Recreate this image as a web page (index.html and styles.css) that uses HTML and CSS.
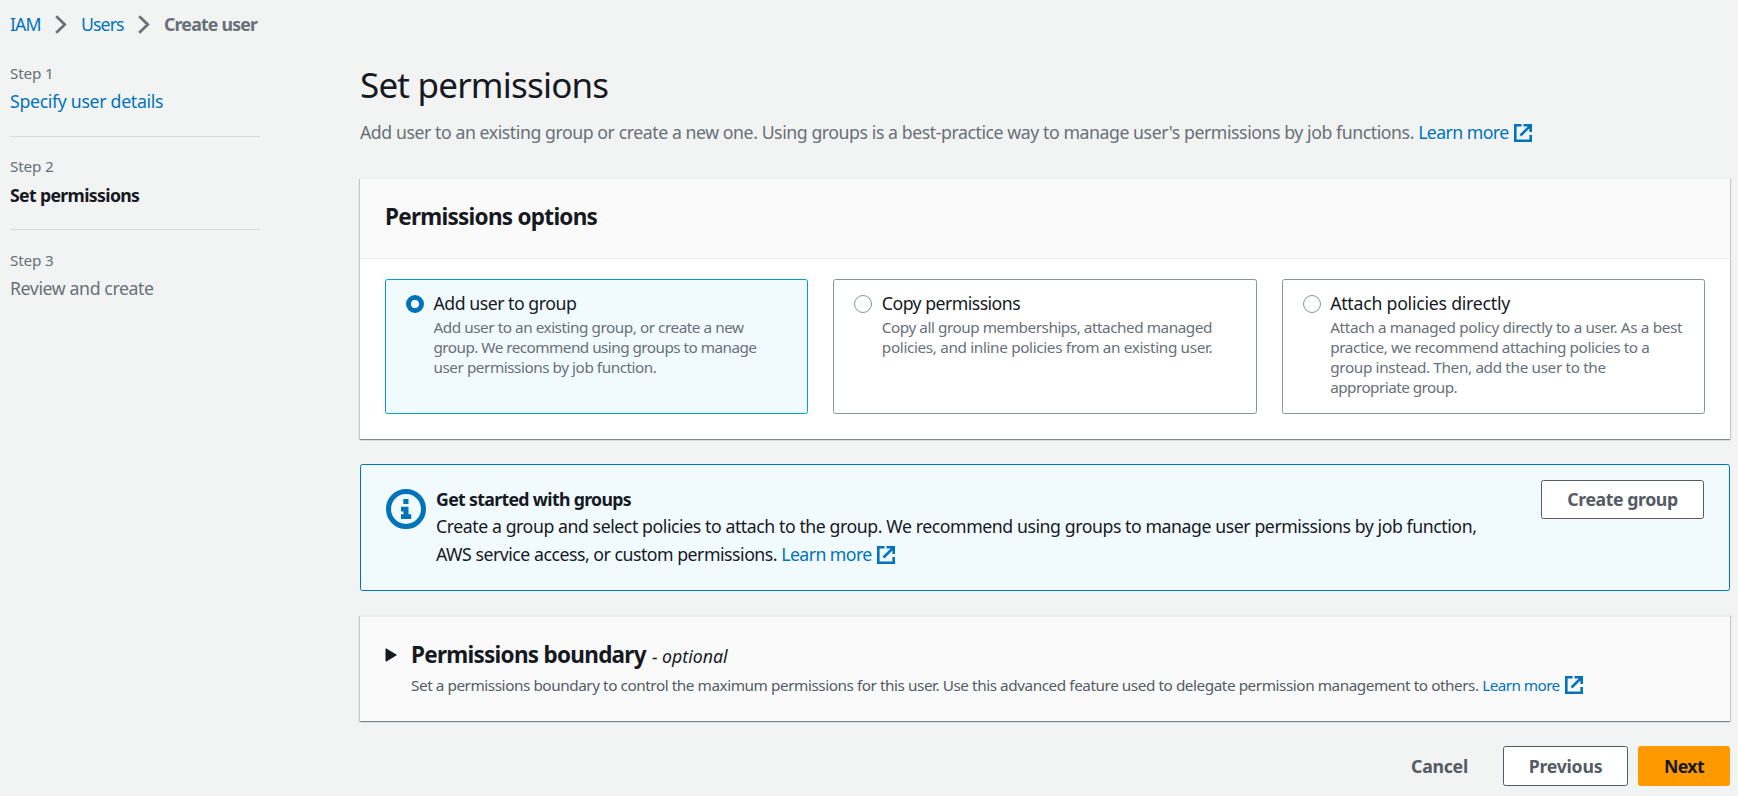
FILE: index.html
```
<!DOCTYPE html>
<html lang="en">
<head>
<meta charset="utf-8">
<title>Create user | IAM</title>
<link rel="stylesheet" href="styles.css">
</head>
<body>
<svg class="defs" width="0" height="0">
  <symbol id="external" viewBox="0 0 18 18"><path d="M7.500 1.300H1.300V16.700H16.700V11M9.500 1.300H16.700V8M16.200 1.800L6.500 11.500" fill="none" stroke="currentColor" stroke-width="2.600"/></symbol>
  <symbol id="chevron" viewBox="0 0 12 19"><path d="M1.2 1.3L9.8 9.5L1.2 17.7" fill="none" stroke="currentColor" stroke-width="2.7"/></symbol>
</svg>
<nav class="breadcrumb">
  <a class="crumb-iam">IAM</a>
  <svg class="chevron"><use href="#chevron"/></svg>
  <a class="crumb-users">Users</a>
  <svg class="chevron"><use href="#chevron"/></svg>
  <span class="crumb-current">Create user</span>
</nav>
<div class="layout">
  <aside class="steps">
    <div class="step"><div class="step-label">Step 1</div><a class="step-title step-link">Specify user details</a></div>
    <div class="step"><div class="step-label">Step 2</div><div class="step-title step-active">Set permissions</div></div>
    <div class="step"><div class="step-label">Step 3</div><div class="step-title step-next">Review and create</div></div>
  </aside>
  <main class="main">
    <h1 class="title">Set permissions</h1>
    <p class="intro">Add user to an existing group or create a new one. Using groups is a best-practice way to manage user's permissions by job functions. <a class="learn">Learn more<svg class="external"><use href="#external"/></svg></a></p>

    <section class="card options">
      <h2 class="card-header">Permissions options</h2>
      <div class="tiles">
        <div class="tile selected">
          <span class="radio"></span>
          <div class="tile-text"><div class="tile-label label-add">Add user to group</div>
          <div class="tile-desc"><span class="snug">Add user to an existing group, or create a new</span><br><span class="tight">group. We recommend using groups to manage</span><br><span class="snug">user permissions by job function.</span></div></div>
        </div>
        <div class="tile">
          <span class="radio"></span>
          <div class="tile-text"><div class="tile-label label-copy">Copy permissions</div>
          <div class="tile-desc"><span class="snug">Copy all group memberships, attached managed</span><br><span class="loose">policies, and inline policies from an existing user.</span></div></div>
        </div>
        <div class="tile">
          <span class="radio"></span>
          <div class="tile-text"><div class="tile-label label-attach">Attach policies directly</div>
          <div class="tile-desc"><span class="loose">Attach a managed policy directly to a user. As a best</span><br>practice, we recommend attaching policies to a<br><span class="loose">group instead. Then, add the user to the</span><br><span class="tight">appropriate group.</span></div></div>
        </div>
      </div>
    </section>

    <section class="info">
      <svg class="info-icon" viewBox="0 0 40 40"><circle cx="20" cy="20" r="17.5" fill="none" stroke="currentColor" stroke-width="5"/><path d="M17.3 10h5.2v5h-5.2zM15 17.8h7.5v7.4h2.7V30H15v-4.800h2.500v-2.700H15z" fill="currentColor"/></svg>
      <div class="info-text">
        <div class="info-title">Get started with groups</div>
        <div class="info-body">Create a group and select policies to attach to the group. We recommend using groups to manage user permissions by job function,<br><span class="info-end">AWS service access, or custom permissions.</span> <a class="learn">Learn more<svg class="external"><use href="#external"/></svg></a></div>
      </div>
      <button class="button create">Create group</button>
    </section>

    <section class="card boundary">
      <svg class="caret" viewBox="0 0 12 14"><path d="M1 .8L11.300 7L1 13.200z" fill="currentColor" stroke="currentColor" stroke-linejoin="round"/></svg>
      <div>
        <div class="boundary-title">Permissions boundary <i class="optional">- optional</i></div>
        <div class="boundary-desc">Set a permissions boundary to control the maximum permissions for this user. Use this advanced feature used to delegate permission management to others. <a class="learn">Learn more<svg class="external"><use href="#external"/></svg></a></div>
      </div>
    </section>

    <div class="actions">
      <button class="button cancel">Cancel</button>
      <button class="button previous">Previous</button>
      <button class="button next">Next</button>
    </div>
  </main>
</div>
</body>
</html>
```
FILE: styles.css
```
* { box-sizing: border-box; }
body {
  margin: 0;
  height: 796px;
  overflow: hidden;
  background: #f2f3f3;
  color: #16191f;
  font: 17.7px/28px "Noto Sans", "Open Sans", sans-serif;
  letter-spacing: -0.43px;
}
.defs { position: absolute; }
a { color: #0073bb; }
.learn { letter-spacing: -0.57px; }

.breadcrumb { display: flex; align-items: center; height: 28px; margin-top: 10px; padding-left: 10px; color: #687078; }
.chevron { width: 12px; height: 19px; margin-top: 1px; }
.crumb-iam { width: 45px; letter-spacing: -0.9px; }
.crumb-users { width: 57px; margin-left: 14px; letter-spacing: -0.9px; }
.crumb-current { margin-left: 14px; font-weight: 700; letter-spacing: -0.78px; }

.layout { display: flex; }
.steps { width: 250px; margin: 25px 0 0 10px; }
.step { height: 74px; margin-bottom: 19px; border-bottom: 1px solid #d5dbdb; }
.step:last-child { margin-top: 20px; border-bottom: 0; }
.step-label { font-size: 15.3px; line-height: 20px; letter-spacing: -0.2px; color: #687078; margin-bottom: 4px; }
.step-title { display: block; }
.step-link { letter-spacing: -0.31px; }
.step-active { padding-top: 1px; font-weight: 700; letter-spacing: -0.66px; }
.step-next { color: #687078; letter-spacing: -0.39px; }

.main { width: 1370px; margin: 25px 0 0 100px; }
.title { margin: 0; font-size: 35px; font-weight: 400; line-height: 44px; letter-spacing: -0.8px; }
.intro { margin: 11px 0 32px; color: #687078; letter-spacing: -0.435px; white-space: nowrap; }
.external { display: inline-block; width: 18px; height: 18px; margin-left: 5px; vertical-align: -3px; }

.card {
  background: #fff;
  border-top: 1px solid #eaeded;
  box-shadow: 0 1px 1px 0 rgba(0,28,36,.3), 1px 1px 1px 0 rgba(0,28,36,.15), -1px 1px 1px 0 rgba(0,28,36,.15);
}
.options { height: 261px; }
.card-header { height: 80px; margin: 0; padding: 24px 25px; background: #fafafa; border-bottom: 1px solid #eaeded; font-size: 22.5px; font-weight: 700; letter-spacing: -0.73px; }
.tiles { display: grid; grid-template-columns: repeat(3, 1fr); gap: 25px; padding: 20px 25px 25px; }
.tile { display: flex; height: 135px; padding: 9px 0 0 20px; border: 1px solid #879596; border-radius: 2.5px; white-space: nowrap; }
.tile.selected { background: #f1faff; border-color: #00a1c9; }
.radio { flex: none; width: 18px; height: 18px; margin: 6px 9.5px 0 0; border: 1.3px solid #879596; border-radius: 50%; background: #fff; }
.selected .radio { border: 5.5px solid #0073bb; }
.tile-desc { font-size: 15.3px; line-height: 20px; color: #687078; letter-spacing: -0.4px; }
.label-add { letter-spacing: -0.48px; }
.label-copy { letter-spacing: -0.54px; }
.label-attach { letter-spacing: -0.24px; }
.snug { letter-spacing: -0.46px; }
.tight { letter-spacing: -0.54px; }
.loose { letter-spacing: -0.35px; }

.info { display: flex; height: 127px; margin-top: 25px; padding: 15px 25px 0; border: 1px solid #0073bb; border-radius: 2.5px; background: #f1faff; white-space: nowrap; }
.info-icon { flex: none; width: 40px; height: 40px; margin: 9px 10px 0 0; color: #0073bb; }
.info-text { flex: 1; padding-top: 5px; }
.info-title { font-weight: 700; letter-spacing: -0.66px; }
.info-body { margin-top: -1px; }
.info-end { letter-spacing: -0.48px; }

.button { height: 40px; padding: 0; border: 1.3px solid #545b64; border-radius: 2.5px; background: #fff; color: #545b64; font: 700 17.7px/36px "Noto Sans", sans-serif; letter-spacing: -0.25px; }
.create { width: 163px; height: 39px; padding-bottom: 2px; letter-spacing: -0.42px; }

.boundary { display: flex; height: 106px; margin-top: 24px; padding: 24px 0 0 25px; margin-bottom: 25px; background: #fafafa; border-top-width: 2px; white-space: nowrap; }
.caret { width: 12px; height: 14px; margin: 7px 14px 0 0; }
.boundary-title { font-size: 22.5px; font-weight: 700; letter-spacing: -0.73px; }
.optional { margin-left: 1px; font-size: 17.7px; font-weight: 400; letter-spacing: 0; }
.boundary-desc { margin-top: 1px; font-size: 15.3px; color: #545b64; letter-spacing: -0.44px; }

.actions { display: flex; justify-content: flex-end; }
.actions .button { padding-bottom: 1px; }
.cancel { width: 57px; margin-right: 35px; border: 0; background: none; }
.previous { width: 125px; margin-right: 10px; }
.next { width: 92px; border-color: #f90; background: #f90; color: #16191f; letter-spacing: -0.6px; }
```
